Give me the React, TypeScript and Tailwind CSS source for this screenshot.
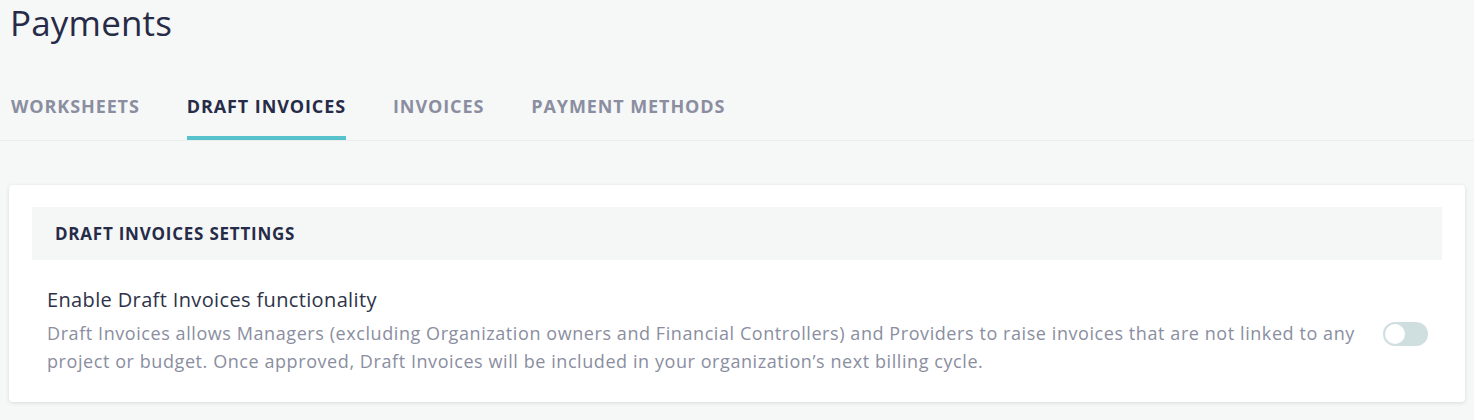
import React, { useState } from 'react';

const tabs = [
    { id: 'worksheets', label: 'Worksheets' },
    { id: 'draft-invoices', label: 'Draft Invoices' },
    { id: 'invoices', label: 'Invoices' },
    { id: 'payment-methods', label: 'Payment Methods' },
];

const Toggle: React.FC<{ on: boolean; onChange: (v: boolean) => void }> = ({ on, onChange }) => (
    <button
        onClick={() => onChange(!on)}
        className={`mt-[35px] w-[45px] h-[24px] rounded-full p-[2px] flex items-center shrink-0 ${on ? 'bg-[#56c2cc] justify-end' : 'bg-[#cfdfe0] justify-start'}`}
    >
        <span className="w-[20px] h-[20px] rounded-full bg-white block" />
    </button>
);

const App: React.FC = () => {
    const [activeTab, setActiveTab] = useState('draft-invoices');
    const [enabled, setEnabled] = useState(false);

    return (
        <div className="min-h-screen bg-[#f6f7f7] font-['Open_Sans',sans-serif] text-[#262b47]">
            <div className="px-[10px] pt-[2px]">
                <h1 className="text-[35px] leading-[42px] font-normal tracking-[0.005em] text-[#262b47]">Payments</h1>
            </div>

            <nav className="mt-[37px] flex gap-[47px] pl-[11px] border-b border-[#eceeee]">
                {tabs.map(tab => (
                    <button
                        key={tab.id}
                        onClick={() => setActiveTab(tab.id)}
                        className={`h-[59px] pb-[4px] uppercase text-[18px] font-bold tracking-[0.05em] border-b-[4px] ${
                            activeTab === tab.id
                                ? 'border-[#56c2cc] text-[#262b47]'
                                : 'border-transparent text-[#8a8ea0]'
                        }`}
                    >
                        {tab.label}
                    </button>
                ))}
            </nav>

            <div className="px-[9px] pt-[44px]">
                <div className="bg-white rounded-[4px] shadow-[0_1px_4px_rgba(0,0,0,0.12)] px-[23px] pt-[22px] pb-[27px]">
                    <div className="bg-[#f5f7f7] h-[53px] flex items-center px-[23px]">
                        <h2 className="uppercase text-[17px] font-bold tracking-[0.045em] text-[#262b47]">Draft Invoices Settings</h2>
                    </div>

                    <div className="flex items-start justify-between pl-[15px] pr-[14px] pt-[27px]">
                        <div>
                            <h3 className="text-[20px] leading-[26px] tracking-[0.018em] text-[#2d3348]">Enable Draft Invoices functionality</h3>
                            <p className="mt-[6px] text-[18px] leading-[28px] tracking-[0.032em] text-[#8a8ea0]">
                                Draft Invoices allows Managers (excluding Organization owners and Financial Controllers) and Providers to raise invoices that are not linked to any
                                <br />
                                project or budget. Once approved, Draft Invoices will be included in your organization’s next billing cycle.
                            </p>
                        </div>
                        <Toggle on={enabled} onChange={setEnabled} />
                    </div>
                </div>
            </div>
        </div>
    );
};

export default App;
